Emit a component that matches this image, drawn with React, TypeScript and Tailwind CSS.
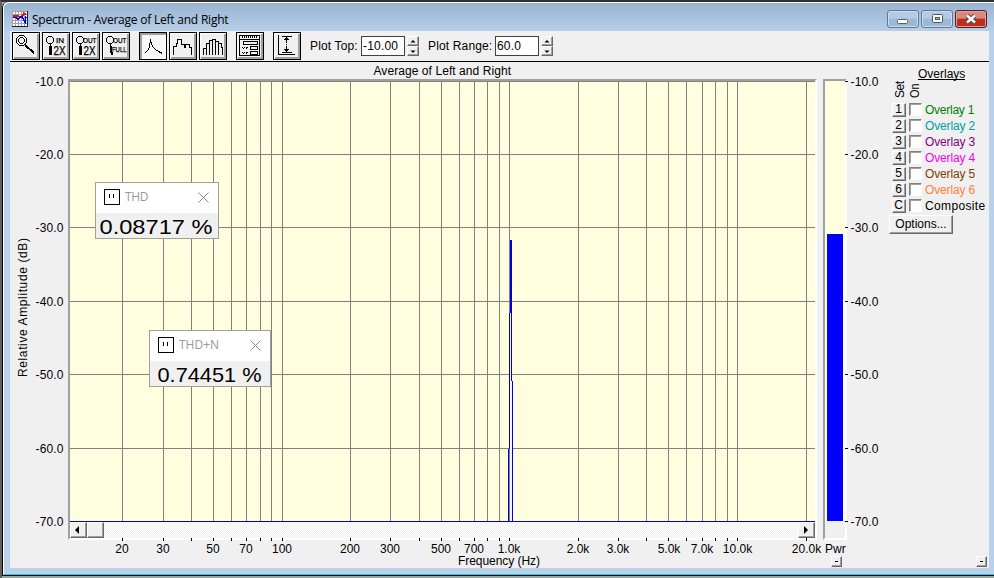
import type { ReactNode } from "react";

const PLOT_LEFT = 70;
const PLOT_TOP = 81;

const levels = [-10, -20, -30, -40, -50, -60, -70];
const levelRows = [81, 154, 227, 301, 374, 448, 521];

const frequencies = [1, 10, 100, 1000]
  .flatMap((decade) => [1, 2, 3, 4, 5, 6, 7, 8, 9].map((n) => n * decade * 10))
  .filter((f) => f >= 20 && f <= 20000);

const frequencyLabels = [
  { x: 122, text: "20" },
  { x: 163, text: "30" },
  { x: 213, text: "50" },
  { x: 246, text: "70" },
  { x: 282, text: "100" },
  { x: 350, text: "200" },
  { x: 390, text: "300" },
  { x: 441, text: "500" },
  { x: 474, text: "700" },
  { x: 509, text: "1.0k" },
  { x: 578, text: "2.0k" },
  { x: 618, text: "3.0k" },
  { x: 669, text: "5.0k" },
  { x: 702, text: "7.0k" },
  { x: 737.5, text: "10.0k" },
  { x: 806.5, text: "20.0k" },
];

const overlays = [
  { key: "1", label: "Overlay 1", color: "text-[#008000] tracking-[-0.25px]" },
  { key: "2", label: "Overlay 2", color: "text-[#00a0a0] tracking-[-0.15px]" },
  { key: "3", label: "Overlay 3", color: "text-[#800080] tracking-[-0.15px]" },
  { key: "4", label: "Overlay 4", color: "text-[#f000f0] tracking-[-0.15px]" },
  { key: "5", label: "Overlay 5", color: "text-[#804000] tracking-[-0.15px]" },
  { key: "6", label: "Overlay 6", color: "text-[#ff8040] tracking-[-0.15px]" },
  { key: "C", label: "Composite", color: "text-black tracking-[0.35px]" },
];

function frequencyX(f: number) {
  return Math.round(122.45 + 227.7 * Math.log10(f / 20));
}

const raised =
  "bg-[#f0f0f0] border border-t-white border-l-white border-r-[#696969] border-b-[#696969] shadow-[inset_-1px_-1px_0_#a0a0a0]";

function ToolButton({ active, children }: { active?: boolean; children: ReactNode }) {
  return (
    <button
      className={
        "size-7 shrink-0 border border-black " +
        (active
          ? "bg-[#f8f8f8] shadow-[inset_2px_2px_0_#a0a0a0,inset_-1px_-1px_0_#fff]"
          : "bg-[#f0f0f0] shadow-[inset_1px_1px_0_#fff,inset_-2px_-2px_0_#a0a0a0]")
      }
    >
      <svg width="26" height="26" viewBox="1 1 26 26" fill="none" stroke="#000" shapeRendering="crispEdges">
        {children}
      </svg>
    </button>
  );
}

function ZoomGlyph({ top, bottom }: { top: string; bottom: string }) {
  const full = bottom === "FULL";
  return (
    <>
      <path d="M6.500 4.500h3l2 2v3l-2 2h-3l-2-2v-3z" />
      <path d="M8.500 12v3" />
      <path d={full ? "M8.500 14v4l2 5" : "M8.500 14v9"} strokeWidth={full ? 2 : 3} />
      <g fill="#000" stroke="#000" strokeWidth="0.25" fontFamily="Liberation Sans, sans-serif">
        <text
          x={top === "IN" ? 14 : 11}
          y="11"
          fontSize="7.500"
          textLength={top === "IN" ? 8 : 13.5}
          lengthAdjust="spacingAndGlyphs"
        >
          {top}
        </text>
        <text
          x={full ? 10 : 11.5}
          y={full ? 20 : 22.5}
          fontSize={full ? 7.5 : 12}
          textLength={full ? 14.5 : 12}
          lengthAdjust="spacingAndGlyphs"
        >
          {bottom}
        </text>
      </g>
    </>
  );
}

function Toolbar() {
  return (
    <div className="h-[31px] flex items-start pt-px pl-0.5 border-b border-black shrink-0">
      <div className="flex gap-0.5">
        <ToolButton>
          <path d="M7.500 3.500h4l3 3v4l-3 3h-4l-3-3v-4z" />
          <path d="M8.500 5.500h2l2 2v2l-2 2h-2l-2-2v-2z" />
          <path d="M13 13l9 8" strokeWidth="2" />
        </ToolButton>
        <ToolButton>
          <ZoomGlyph top="IN" bottom="2X" />
        </ToolButton>
        <ToolButton>
          <ZoomGlyph top="OUT" bottom="2X" />
        </ToolButton>
        <ToolButton>
          <ZoomGlyph top="OUT" bottom="FULL" />
        </ToolButton>
      </div>
      <div className="flex gap-0.5 ml-[9px]">
        <ToolButton active>
          <path d="M5.500 21.500l3-3 1.500-2 1.500-8 2 6 3 3 3 2 4 2" />
        </ToolButton>
        <ToolButton>
          <path d="M4.500 23v-8.500h3v-3h1v-4h4v5h3v3h1v-3h4v3h2V23" />
        </ToolButton>
        <ToolButton>
          <path d="M4.500 23v-7h3v-5h3v-3h3v-1h3v2h3v2h3v4h1v8M7.500 23v-8M10.500 23V10M13.500 23V8M16.500 23V9M19.500 23V11" />
        </ToolButton>
      </div>
      <div className="flex gap-[9px] ml-[9px]">
        <ToolButton>
          <path d="M3.500 3.500h20v20h-20zM3.500 7.500h20" />
          <path d="M6 5h15" strokeWidth="2" strokeDasharray="1 1" />
          <path d="M7.500 9.500h14v3h-14zM14.500 14.500h7v3h-7zM14.500 19.500h7v3h-7z" />
          <path d="M6 15.500h1m1 0h1m1 0h2M7 16.500h1m2 0h1M6 20.500h1m1 0h1m1 0h2M7 21.500h1m2 0h1" />
        </ToolButton>
        <ToolButton>
          <path d="M5.500 3v19.500H22M9 4.500h10M9 20.500h10M13.500 5v6m0 1v1m0 1v6" />
          <path d="M11 7.500h5M12 6.500h3M11 17.500h5M12 18.500h3" />
        </ToolButton>
      </div>
      <NumberField label="Plot Top:" value="-10.00" className="ml-[9px]" width="w-[51px]" />
      <NumberField label="Plot Range:" value="60.0" className="ml-[9px]" width="w-[67px]" />
    </div>
  );
}

function NumberField({
  label,
  value,
  className,
  width,
}: {
  label: string;
  value: string;
  className: string;
  width: string;
}) {
  return (
    <div className={"flex items-start pt-1 " + className}>
      <span className={"leading-[21px] tracking-[0.15px] whitespace-nowrap " + width}>{label}</span>
      <div className="w-11 h-5 bg-white border border-[#404040] pl-px leading-[18px] tracking-[0.2px]">
        {value}
      </div>
      <div className="ml-0.5 flex flex-col">
        {["M2.500 5.500h5l-2.500-2.500z", "M2.500 3.500h5l-2.500 2.500z"].map((d) => (
          <button key={d} className={"w-3 h-2.5 flex items-center justify-center " + raised}>
            <svg className="shrink-0" width="10" height="8">
              <path d={d} />
            </svg>
          </button>
        ))}
      </div>
    </div>
  );
}

function TitleBar() {
  const control =
    "w-8 h-[18px] rounded-[3px] border border-[#5f7896] shadow-[inset_0_0_0_1px_#c8dbef] flex items-center justify-center bg-linear-to-b from-[#b5cbe3] from-45% to-[#9cb8d5] to-50%";
  return (
    <div className="h-[28px] flex shrink-0 justify-between">
      <div className="flex pt-2 pl-2">
        <svg className="shrink-0" width="16" height="16" shapeRendering="crispEdges">
          <rect width="16" height="16" fill="#fff" />
          <path
            d="M0 .5h15M0 3.500h15M0 6.500h15M0 9.500h15M0 12.500h15M.5 0v15M3.500 0v15M6.500 0v15M9.500 0v15M12.500 0v15"
            stroke="#a0a0a8"
          />
          <path d="M0 15.500h16M15.500 0v16" stroke="#202020" />
          <path d="M1 4.500h4l2 1h3l2-3 2 1" stroke="#e01020" strokeWidth="2" fill="none" />
          <path d="M1 6.500h3l2 2 2-2 2-1 1 2 2 4 1-6" stroke="#0000e0" strokeWidth="1.500" fill="none" />
        </svg>
        <span className="ml-1 leading-[18px] text-[12px] tracking-[-0.22px] whitespace-nowrap font-['Open_Sans','Noto_Sans',sans-serif]">
          Spectrum - Average of Left and Right
        </span>
      </div>
      <div className="flex gap-0.5 pt-[7px] pr-[7px]">
        <button className={control}>
          <svg width="12" height="10">
            <rect x=".5" y="5.500" width="10" height="4" rx="1" fill="#fff" stroke="#56606c" />
          </svg>
        </button>
        <button className={control}>
          <svg width="12" height="10">
            <rect x="1.500" y=".5" width="10" height="8" rx="1" fill="#fff" stroke="#4a5664" />
            <rect x="4.500" y="3.500" width="4" height="2" fill="#9cb8d5" stroke="#4a5664" />
          </svg>
        </button>
        <button className="w-8 h-[18px] rounded-[3px] border border-[#5a1a20] shadow-[inset_0_0_0_1px_#e0a396] flex items-center justify-center bg-linear-to-b from-[#d98a7c] from-45% to-[#b8301c] to-50%">
          <svg width="12" height="10">
            <path d="M2 1.500l8 7M10 1.500l-8 7" stroke="#53424c" strokeWidth="4.500" />
            <path d="M2 1.500l8 7M10 1.500l-8 7" stroke="#fff" strokeWidth="2.500" />
          </svg>
        </button>
      </div>
    </div>
  );
}

function Readout({
  title,
  value,
  className,
  tracking,
  width,
}: {
  title: string;
  value: string;
  className: string;
  tracking: string;
  width: number;
}) {
  return (
    <div className={"absolute h-[57px] border border-[#a0a098] bg-[#f0f0f0] " + className}>
      <div className="h-[30px] bg-white flex items-center pb-0.5 pl-2 pr-[9px]">
        <svg width="16" height="16" fill="none" stroke="#000" shapeRendering="crispEdges">
          <rect x=".5" y=".5" width="15" height="15" />
          <path d="M5.500 5v4M9.500 5v4" />
        </svg>
        <span className={"ml-[5px] text-[12px] text-[#999] font-['Open_Sans','Noto_Sans',sans-serif] " + tracking}>
          {title}
        </span>
        <svg className="ml-auto" width="11" height="11" stroke="#888">
          <path d="M.5.5l10 10M10.500.5l-10 10" />
        </svg>
      </div>
      <svg className="mx-auto block" width={width} height="25">
        <text x="-0.500" y="21" fontSize="21" textLength={width - 1} lengthAdjust="spacingAndGlyphs">
          {value}
        </text>
      </svg>
    </div>
  );
}

function SpectrumPlot() {
  return (
    <div className="relative w-[745px] h-[441px]">
      <svg className="block" width="745" height="441" viewBox={`${PLOT_LEFT} ${PLOT_TOP} 745 441`} shapeRendering="crispEdges">
        <rect x="70" y="81" width="745" height="441" fill="#ffffe0" />
        {levelRows.map((y) => (
          <rect key={y} x="70" y={y} width="745" height="1" fill="#808080" />
        ))}
        {frequencies.map((f) => (
          <rect key={f} x={frequencyX(f)} y="81" width="1" height="441" fill="#808080" />
        ))}
        <rect x="510" y="313" width="1" height="208" fill="#f4f4ff" />
        <rect x="511" y="381" width="1" height="140" fill="#f4f4ff" />
        <g fill="#0000d8">
          <rect x="510" y="240" width="2" height="73" />
          <rect x="509" y="313" width="1" height="136" />
          <rect x="511" y="313" width="1" height="68" />
          <rect x="508" y="449" width="1" height="72" />
          <rect x="512" y="381" width="1" height="140" />
          <rect x="70" y="521" width="745" height="1" />
        </g>
      </svg>
      <Readout
        title="THD"
        value="0.08717 %"
        width={114}
        tracking="tracking-[-0.3px]"
        className="left-[25px] top-[101px] w-[124px]"
      />
      <Readout
        title="THD+N"
        value="0.74451 %"
        width={105}
        tracking="tracking-normal"
        className="left-[79px] top-[249px] w-[122px]"
      />
    </div>
  );
}

function ScrollBar() {
  return (
    <div className="h-4 w-[745px] flex bg-[repeating-conic-gradient(#f0f0f0_0_25%,#fff_0_50%)] bg-[length:2px_2px]">
      <button className={"w-[17px] h-4 flex items-center justify-center pr-1 " + raised}>
        <svg width="6" height="8">
          <path d="M5 0v8L1 4z" />
        </svg>
      </button>
      <div className={"w-[17px] h-4 " + raised} />
      <button className={"w-[17px] h-4 ml-auto flex items-center justify-center pr-0.5 " + raised}>
        <svg width="6" height="8">
          <path d="M1 0v8l4-4z" />
        </svg>
      </button>
    </div>
  );
}

function LevelAxis() {
  return (
    <svg className="block overflow-visible shrink-0" width="58" height="461" viewBox="10 79 58 461">
      {levels.map((level, i) => (
        <g key={level}>
          <text x="35.500" y={levelRows[i] + 5} textLength="28">
            {level.toFixed(1)}
          </text>
          <rect x="68" y={levelRows[i]} width="2" height="1" />
        </g>
      ))}
      <text transform="translate(27 377) rotate(-90)" textLength="139">
        Relative Amplitude (dB)
      </text>
    </svg>
  );
}

function FrequencyAxis() {
  return (
    <svg className="block overflow-visible" width="813" height="27" viewBox="10 540 813 27">
      {frequencies.map((f) => (
        <rect key={f} x={frequencyX(f)} y="538" width="1" height="3" />
      ))}
      {frequencyLabels.map(({ x, text }) => (
        <text key={text} x={x} y="553" textAnchor="middle">
          {text}
        </text>
      ))}
      <text x="458" y="565" textLength="82">
        Frequency (Hz)
      </text>
    </svg>
  );
}

function PowerMeter() {
  return (
    <div className="w-[65px] flex flex-col shrink-0">
      <div className="h-[17px]" />
      <div className="flex">
        <div className="w-6 h-[461px] border-2 border-[#a0a0a0] border-r-white border-b-white bg-[#f0f0f0]">
          <div className="h-[153px] bg-[#ffffe0]" />
          <div className="h-[287px] bg-[#ffffe0] flex pl-0.5">
            <div className="w-4 bg-[#0000ff]" />
          </div>
        </div>
        <svg className="block overflow-visible" width="36" height="461" viewBox="847 79 36 461">
          {levels.map((level, i) => (
            <g key={level}>
              <text x="850.500" y={levelRows[i] + 5} textLength="28">
                {level.toFixed(1)}
              </text>
              <rect x="845" y={levelRows[i]} width="3" height="1" />
            </g>
          ))}
        </svg>
      </div>
      <div className="leading-4 pl-0.5 h-4 pt-px">Pwr</div>
      <button className={"size-[11px] ml-2 flex items-center justify-center " + raised}>
        <span className="w-[3px] h-px bg-black" />
      </button>
    </div>
  );
}

function OverlayPanel() {
  return (
    <div className="flex-1 flex flex-col pl-px pt-[5px]">
      <div className="ml-[29px] leading-[15px] h-[15px]">
        <span className="border-b border-black block w-[47px] h-[13px] leading-[15px]">Overlays</span>
      </div>
      <svg className="block overflow-visible" width="40" height="20" viewBox="889 82 40 20">
        <text transform="translate(903.500 98) rotate(-90)" textLength="17">Set</text>
        <text transform="translate(918.500 98) rotate(-90)" textLength="14.500" lengthAdjust="spacingAndGlyphs">On</text>
      </svg>
      <div className="flex flex-col pl-[3px]">
        {overlays.map(({ key, label, color }) => (
          <div key={key} className="h-4 flex items-start whitespace-nowrap">
            <button className={"w-3.5 h-[14px] mt-px pb-0.5 text-[12px] leading-[10px] text-center " + raised}>
              <span className="block -ml-px">{key}</span>
            </button>
            <span className="ml-[3px] mt-px size-[13px] bg-white border border-r-white border-b-white border-[#808080] shadow-[inset_1px_1px_0_#a0a0a0]" />
            <span className={"ml-[3px] h-4 leading-4 " + color}>{label}</span>
          </div>
        ))}
      </div>
      <button className={"w-16 h-[19px] mt-px text-[12px] leading-[15px] " + raised}>Options...</button>
      <button className={"size-[11px] mt-auto ml-auto mr-0.5 mb-px flex items-center justify-center " + raised}>
        <span className="w-[3px] h-px bg-black" />
      </button>
    </div>
  );
}

export default function App() {
  return (
    <div className="w-[994px] h-[578px] overflow-hidden bg-[#a0a0a0] border-t-2 border-l-2 border-t-[#302e36] border-l-[#606060] text-[12px] text-black font-['Liberation_Sans',Arial,sans-serif]">
      <div className="h-[574px] flex flex-col rounded-tl-md border-l border-b border-black bg-[#b9d1ea]">
        <div className="h-[573px] flex flex-col rounded-tl-md border-t border-l border-b border-t-white border-l-white border-b-[#20d0e8] bg-linear-to-b from-[#99b4d1] to-[#b9d1ea] to-[30px]">
          <TitleBar />
          <div className="ml-1.5 w-[979px] h-[537px] bg-[#f0f0f0] flex flex-col">
            <Toolbar />
            <div className="flex flex-1">
              <div className="w-[813px] shrink-0">
                <div className="h-[17px] pl-[363.5px] leading-[18px] tracking-[0.07px]">Average of Left and Right</div>
                <div className="flex">
                  <LevelAxis />
                  <div className="w-[749px] h-[461px] border-2 border-[#a0a0a0] border-r-white border-b-white">
                    <SpectrumPlot />
                    <ScrollBar />
                  </div>
                </div>
                <FrequencyAxis />
              </div>
              <PowerMeter />
              <OverlayPanel />
            </div>
          </div>
        </div>
      </div>
    </div>
  );
}
